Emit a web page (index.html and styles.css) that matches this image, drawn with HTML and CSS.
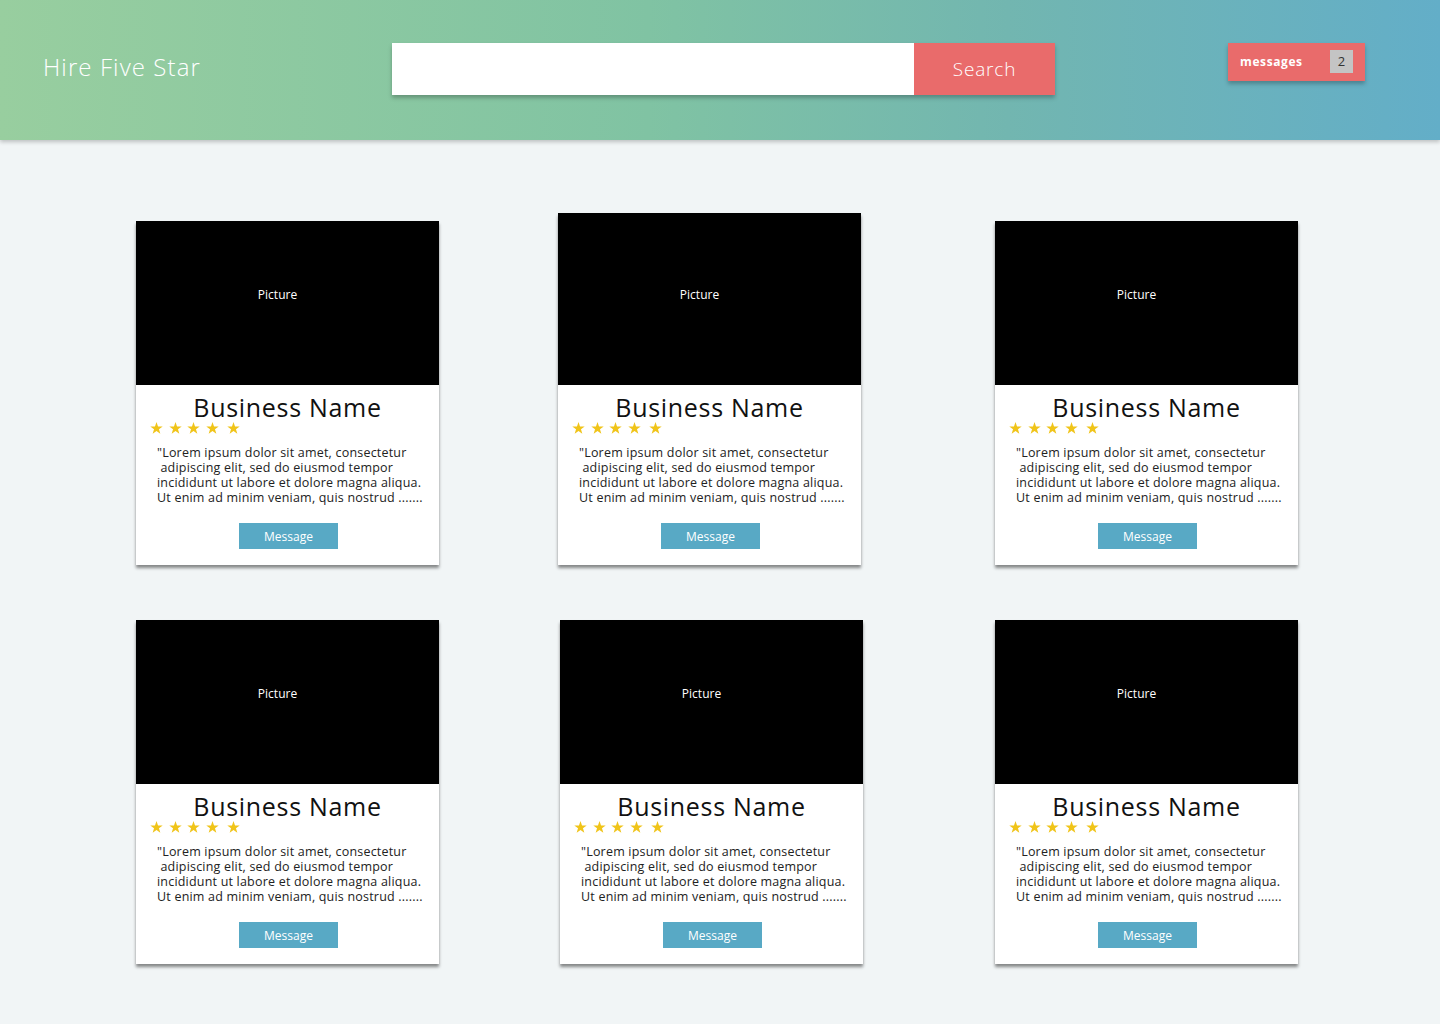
FILE: index.html
```html
<!DOCTYPE html>
<html>
<head>
<meta charset="utf-8">
<title>Hire Five Star</title>
<link rel="stylesheet" href="styles.css">
</head>
<body>
<svg width="0" height="0" class="defs" aria-hidden="true">
  <defs>
    <polygon id="star" points="6.5,0 8.03,4.4 12.68,4.49 8.97,7.3 10.32,11.76 6.5,9.1 2.68,11.76 4.03,7.3 0.32,4.49 4.97,4.4"/>
  </defs>
</svg>
<header class="topbar">
  <div class="logo">Hire Five Star</div>
  <form class="search">
    <input class="search-input" type="text">
    <button class="search-btn" type="button">Search</button>
  </form>
  <button class="messages" type="button"><span class="messages-label">messages</span><span class="badge">2</span></button>
</header>

<main class="grid">
  <div class="card">
    <div class="picture"><span>Picture</span></div>
    <div class="card-body">
      <h2 class="name">Business Name</h2>
      <div class="stars"><svg class="star" viewBox="0 0 13 12"><use href="#star"/></svg><svg class="star" viewBox="0 0 13 12"><use href="#star"/></svg><svg class="star" viewBox="0 0 13 12"><use href="#star"/></svg><svg class="star" viewBox="0 0 13 12"><use href="#star"/></svg><svg class="star last" viewBox="0 0 13 12"><use href="#star"/></svg></div>
      <p class="desc">"Lorem ipsum dolor sit amet, consectetur<br>&nbsp;adipiscing elit, sed do eiusmod tempor<br>incididunt ut labore et dolore magna aliqua.<br>Ut enim ad minim veniam, quis nostrud .......</p>
      <button class="msg-btn" type="button">Message</button>
    </div>
  </div>
  <div class="card">
    <div class="picture tall"><span>Picture</span></div>
    <div class="card-body">
      <h2 class="name">Business Name</h2>
      <div class="stars"><svg class="star" viewBox="0 0 13 12"><use href="#star"/></svg><svg class="star" viewBox="0 0 13 12"><use href="#star"/></svg><svg class="star" viewBox="0 0 13 12"><use href="#star"/></svg><svg class="star" viewBox="0 0 13 12"><use href="#star"/></svg><svg class="star last" viewBox="0 0 13 12"><use href="#star"/></svg></div>
      <p class="desc">"Lorem ipsum dolor sit amet, consectetur<br>&nbsp;adipiscing elit, sed do eiusmod tempor<br>incididunt ut labore et dolore magna aliqua.<br>Ut enim ad minim veniam, quis nostrud .......</p>
      <button class="msg-btn" type="button">Message</button>
    </div>
  </div>
  <div class="card">
    <div class="picture"><span>Picture</span></div>
    <div class="card-body">
      <h2 class="name">Business Name</h2>
      <div class="stars"><svg class="star" viewBox="0 0 13 12"><use href="#star"/></svg><svg class="star" viewBox="0 0 13 12"><use href="#star"/></svg><svg class="star" viewBox="0 0 13 12"><use href="#star"/></svg><svg class="star" viewBox="0 0 13 12"><use href="#star"/></svg><svg class="star last" viewBox="0 0 13 12"><use href="#star"/></svg></div>
      <p class="desc">"Lorem ipsum dolor sit amet, consectetur<br>&nbsp;adipiscing elit, sed do eiusmod tempor<br>incididunt ut labore et dolore magna aliqua.<br>Ut enim ad minim veniam, quis nostrud .......</p>
      <button class="msg-btn" type="button">Message</button>
    </div>
  </div>
  <div class="card">
    <div class="picture"><span>Picture</span></div>
    <div class="card-body">
      <h2 class="name">Business Name</h2>
      <div class="stars"><svg class="star" viewBox="0 0 13 12"><use href="#star"/></svg><svg class="star" viewBox="0 0 13 12"><use href="#star"/></svg><svg class="star" viewBox="0 0 13 12"><use href="#star"/></svg><svg class="star" viewBox="0 0 13 12"><use href="#star"/></svg><svg class="star last" viewBox="0 0 13 12"><use href="#star"/></svg></div>
      <p class="desc">"Lorem ipsum dolor sit amet, consectetur<br>&nbsp;adipiscing elit, sed do eiusmod tempor<br>incididunt ut labore et dolore magna aliqua.<br>Ut enim ad minim veniam, quis nostrud .......</p>
      <button class="msg-btn" type="button">Message</button>
    </div>
  </div>
  <div class="card shifted">
    <div class="picture"><span>Picture</span></div>
    <div class="card-body">
      <h2 class="name">Business Name</h2>
      <div class="stars"><svg class="star" viewBox="0 0 13 12"><use href="#star"/></svg><svg class="star" viewBox="0 0 13 12"><use href="#star"/></svg><svg class="star" viewBox="0 0 13 12"><use href="#star"/></svg><svg class="star" viewBox="0 0 13 12"><use href="#star"/></svg><svg class="star last" viewBox="0 0 13 12"><use href="#star"/></svg></div>
      <p class="desc">"Lorem ipsum dolor sit amet, consectetur<br>&nbsp;adipiscing elit, sed do eiusmod tempor<br>incididunt ut labore et dolore magna aliqua.<br>Ut enim ad minim veniam, quis nostrud .......</p>
      <button class="msg-btn" type="button">Message</button>
    </div>
  </div>
  <div class="card">
    <div class="picture"><span>Picture</span></div>
    <div class="card-body">
      <h2 class="name">Business Name</h2>
      <div class="stars"><svg class="star" viewBox="0 0 13 12"><use href="#star"/></svg><svg class="star" viewBox="0 0 13 12"><use href="#star"/></svg><svg class="star" viewBox="0 0 13 12"><use href="#star"/></svg><svg class="star" viewBox="0 0 13 12"><use href="#star"/></svg><svg class="star last" viewBox="0 0 13 12"><use href="#star"/></svg></div>
      <p class="desc">"Lorem ipsum dolor sit amet, consectetur<br>&nbsp;adipiscing elit, sed do eiusmod tempor<br>incididunt ut labore et dolore magna aliqua.<br>Ut enim ad minim veniam, quis nostrud .......</p>
      <button class="msg-btn" type="button">Message</button>
    </div>
  </div>
</main>
</body>
</html>
```

FILE: styles.css
```css
* { box-sizing: border-box; }

body {
  margin: 0;
  background: #f1f5f6;
  font-family: "Open Sans", "Noto Sans", sans-serif;
  width: 1440px;
  height: 1024px;
  overflow: hidden;
}

.defs {
  position: absolute;
  width: 0;
  height: 0;
}

.topbar {
  height: 140px;
  background: linear-gradient(90deg, #98ce9f 0%, #80c3a3 45%, #72b6b0 70%, #63aec8 100%);
  box-shadow: 0 2px 4px rgba(0, 0, 0, 0.22);
  display: flex;
  align-items: flex-start;
  padding: 43px 0 0 43px;
}

.logo {
  width: 349px;
  height: 52px;
  line-height: 48px;
  color: #ffffff;
  font-size: 24px;
  font-weight: 300;
  letter-spacing: 1.1px;
}

.search {
  display: flex;
  margin: 0;
  width: 663px;
  height: 52px;
  box-shadow: 0 3px 4px rgba(0, 0, 0, 0.25);
}

.search-input {
  flex: 0 0 522px;
  height: 52px;
  border: none;
  margin: 0;
  padding: 0 12px;
  background: #ffffff;
  outline: none;
}

.search-btn {
  flex: 1;
  height: 52px;
  border: none;
  margin: 0;
  background: #e96b6b;
  color: #ffffff;
  font-family: inherit;
  font-size: 19px;
  font-weight: 300;
  letter-spacing: 0.8px;
  padding: 0;
}

.messages {
  margin-left: 173px;
  width: 137px;
  height: 38px;
  border: none;
  background: #e96b6b;
  box-shadow: 0 3px 4px rgba(0, 0, 0, 0.25);
  display: flex;
  align-items: center;
  justify-content: space-between;
  padding: 0 12px 0 12px;
  font-family: inherit;
}

.messages-label {
  color: #ffffff;
  font-size: 12px;
  font-weight: 700;
  letter-spacing: 0.6px;
  margin-top: -2px;
}

.badge {
  width: 23px;
  height: 23px;
  background: #c4c4c4;
  color: #333333;
  font-size: 13px;
  line-height: 22px;
  text-align: center;
  margin-top: -1px;
}

.grid {
  display: grid;
  grid-template-columns: 422px 437px 303px;
  row-gap: 55px;
  align-items: end;
  padding: 0 0 0 136px;
  margin-top: 73px;
}

.card {
  width: 303px;
  background: #ffffff;
  box-shadow: 0 3px 3px rgba(0, 0, 0, 0.45);
}

.card.shifted { margin-left: 2px; }

.picture {
  height: 164px;
  background: #000000;
  color: #ffffff;
  font-size: 12px;
  line-height: 16px;
  display: flex;
  align-items: flex-end;
  justify-content: center;
  padding: 0 20px 82px 0;
}

.picture.tall {
  height: 172px;
}

.card-body {
  height: 180px;
  display: flex;
  flex-direction: column;
  padding: 7px 0 0;
}

.name {
  margin: 0;
  text-align: center;
  font-size: 25px;
  font-weight: 400;
  line-height: 30px;
  color: #111111;
  letter-spacing: 0.7px;
}

.stars {
  display: flex;
  align-items: center;
  gap: 5.5px;
  padding-left: 14px;
  height: 14px;
  margin-top: -1px;
}

.star {
  width: 13px;
  height: 12px;
  fill: #f0c419;
}

.star.last { margin-left: 2.5px; }

.desc {
  margin: 10px 0 0 21px;
  font-size: 12.5px;
  line-height: 15px;
  color: #222222;
  letter-spacing: 0.2px;
  white-space: nowrap;
}

.msg-btn {
  align-self: center;
  margin: 18px 0 0 2px;
  width: 99px;
  height: 26px;
  border: none;
  background: #58a9c5;
  color: #ffffff;
  font-family: inherit;
  font-size: 12px;
  padding: 0;
}
```
